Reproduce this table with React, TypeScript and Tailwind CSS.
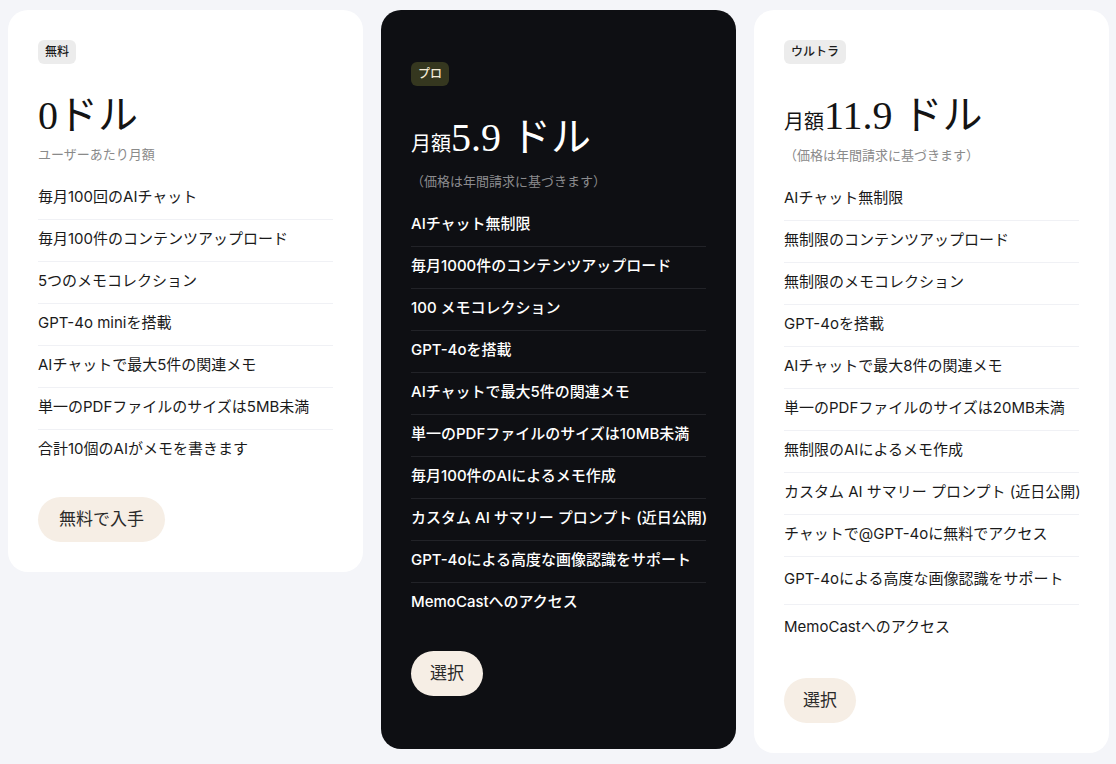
const sans = "font-['Inter','Noto_Sans_CJK_JP',sans-serif]"
const serif = "font-['Liberation_Serif','Noto_Sans_CJK_JP',serif]"

type Feature = { text: string; cls?: string }

type Plan = {
  badge: string
  prefix?: string
  price: string
  note: string
  noteGap: string
  features: Feature[]
  button: string
  buttonPad: string
  dark?: boolean
  cardPad: string
  buttonGap: string
}

const plans: Plan[] = [
  {
    badge: "無料",
    price: "0ドル",
    note: "ユーザーあたり月額",
    noteGap: "mt-[4px]",
    cardPad: "py-[30px]",
    buttonGap: "mt-[26px]",
    button: "無料で入手",
    buttonPad: "px-[21px]",
    features: [
      { text: "毎月100回のAIチャット" },
      { text: "毎月100件のコンテンツアップロード" },
      { text: "5つのメモコレクション" },
      { text: "GPT-4o miniを搭載" },
      { text: "AIチャットで最大5件の関連メモ" },
      { text: "単一のPDFファイルのサイズは5MB未満" },
      { text: "合計10個のAIがメモを書きます" },
    ],
  },
  {
    badge: "プロ",
    prefix: "月額",
    price: "5.9 ドル",
    note: "（価格は年間請求に基づきます）",
    noteGap: "mt-[9px]",
    cardPad: "pt-[52px] pb-[53px]",
    buttonGap: "mt-[27px]",
    button: "選択",
    buttonPad: "px-[19px]",
    dark: true,
    features: [
      { text: "AIチャット無制限" },
      { text: "毎月1000件のコンテンツアップロード" },
      { text: "100 メモコレクション" },
      { text: "GPT-4oを搭載" },
      { text: "AIチャットで最大5件の関連メモ" },
      { text: "単一のPDFファイルのサイズは10MB未満" },
      { text: "毎月100件のAIによるメモ作成" },
      { text: "カスタム AI サマリー プロンプト (近日公開)" },
      { text: "GPT-4oによる高度な画像認識をサポート" },
      { text: "MemoCastへのアクセス" },
    ],
  },
  {
    badge: "ウルトラ",
    prefix: "月額",
    price: "11.9 ドル",
    note: "（価格は年間請求に基づきます）",
    noteGap: "mt-[5px]",
    cardPad: "py-[30px]",
    buttonGap: "mt-[29px]",
    button: "選択",
    buttonPad: "px-[19px]",
    features: [
      { text: "AIチャット無制限" },
      { text: "無制限のコンテンツアップロード" },
      { text: "無制限のメモコレクション" },
      { text: "GPT-4oを搭載" },
      { text: "AIチャットで最大8件の関連メモ" },
      { text: "単一のPDFファイルのサイズは20MB未満" },
      { text: "無制限のAIによるメモ作成" },
      { text: "カスタム AI サマリー プロンプト (近日公開)" },
      { text: "チャットで@GPT-4oに無料でアクセス" },
      { text: "GPT-4oによる高度な画像認識をサポート", cls: "pt-[11px] pb-[14px]" },
      { text: "MemoCastへのアクセス", cls: "pt-[11px] pb-[11px]" },
    ],
  },
]

function PlanCard({ plan }: { plan: Plan }) {
  const dark = plan.dark
  return (
    <div
      className={`w-[355px] shrink-0 rounded-[20px] px-[30px] ${plan.cardPad} ${
        dark ? "bg-[#0e0f13]" : "bg-white"
      }`}
    >
      {/* Badge */}
      <div className="flex">
        <span
          className={`${sans} h-[24px] px-[7px] rounded-[6px] text-[12px] font-medium leading-[24px] ${
            dark ? "bg-[#35371f] text-[#f3ead6]" : "bg-[#ececec] text-[#1c1c1c]"
          }`}
        >
          {plan.badge}
        </span>
      </div>

      {/* Price */}
      <div
        className={`${serif} mt-[28px] flex items-baseline h-[48px] leading-[48px] ${
          dark ? "text-white" : "text-[#141414]"
        }`}
      >
        {plan.prefix && <span className={`${sans} text-[20px]`}>{plan.prefix}</span>}
        <span className="text-[40px] whitespace-pre">{plan.price}</span>
      </div>
      <p
        className={`${sans} ${plan.noteGap} text-[13px] leading-[20px] ${
          dark ? "text-[#8b8b8e]" : "text-[#8a8a8a]"
        }`}
      >
        {plan.note}
      </p>

      {/* Features */}
      <ul className="mt-[14px]">
        {plan.features.map((f, i) => {
          const last = i === plan.features.length - 1
          return (
            <li
              key={f.text}
              className={`${sans} whitespace-nowrap text-[15px] leading-[22px] ${
                f.cls ?? "pt-[8px] pb-[11px]"
              } ${last ? "" : dark ? "border-b border-[#222328]" : "border-b border-[#f0f1f5]"} ${
                dark ? "text-white font-medium" : "text-[#1a1a1a]"
              }`}
            >
              {f.text}
            </li>
          )
        })}
      </ul>

      <div className={`flex ${plan.buttonGap}`}>
        <button
          className={`${serif} ${plan.buttonPad} h-[45px] rounded-full bg-[#f6eee5] text-[17px] text-[#2a2a2a]`}
        >
          {plan.button}
        </button>
      </div>
    </div>
  )
}

export default function App() {
  return (
    <div className="min-h-screen w-full bg-[#f4f5f9] flex items-start gap-[18px] pl-[8px] pt-[10px]">
      {plans.map((p) => (
        <PlanCard key={p.badge} plan={p} />
      ))}
    </div>
  )
}
